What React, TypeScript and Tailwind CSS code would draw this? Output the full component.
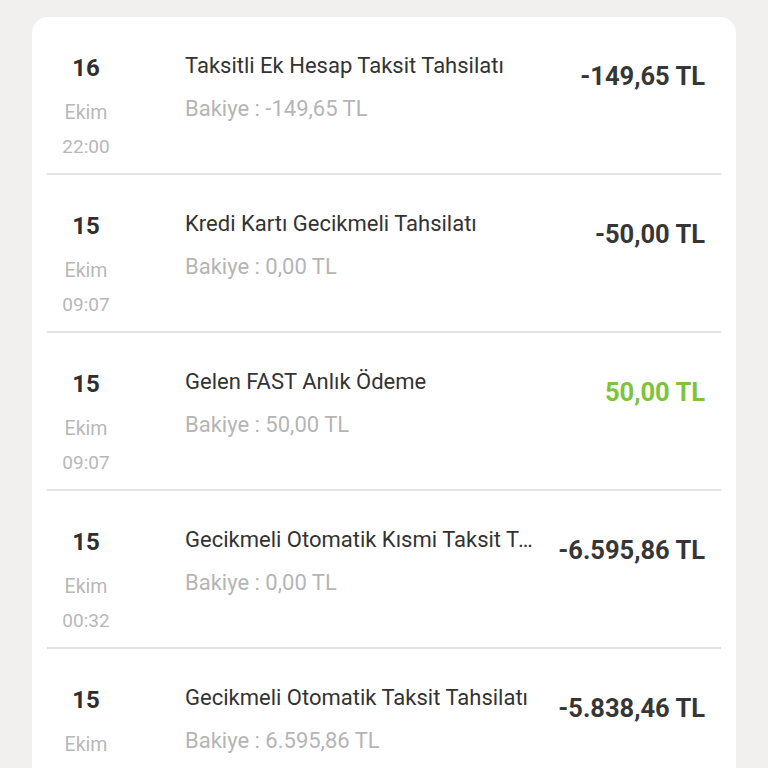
import React from "react";

type Row = { day: string; month: string; time: string; title: string; balance: string; amount: string; positive?: boolean };

const rows: Row[] = [
  { day: "16", month: "Ekim", time: "22:00", title: "Taksitli Ek Hesap Taksit Tahsilatı", balance: "Bakiye : -149,65 TL", amount: "-149,65 TL" },
  { day: "15", month: "Ekim", time: "09:07", title: "Kredi Kartı Gecikmeli Tahsilatı", balance: "Bakiye : 0,00 TL", amount: "-50,00 TL" },
  { day: "15", month: "Ekim", time: "09:07", title: "Gelen FAST Anlık Ödeme", balance: "Bakiye : 50,00 TL", amount: "50,00 TL", positive: true },
  { day: "15", month: "Ekim", time: "00:32", title: "Gecikmeli Otomatik Kısmi Taksit Tahsilatı", balance: "Bakiye : 0,00 TL", amount: "-6.595,86 TL" },
  { day: "15", month: "Ekim", time: "00:00", title: "Gecikmeli Otomatik Taksit Tahsilatı", balance: "Bakiye : 6.595,86 TL", amount: "-5.838,46 TL" },
];

export default function App() {
  return (
    <div className="w-[768px] h-[768px] overflow-hidden bg-[#f1f0ee] pt-[17px] px-[32px]" style={{ fontFamily: "Roboto, sans-serif" }}>
      <div className="bg-white rounded-t-[16px] px-[15px] h-[800px]">
        {rows.map((r, i) => (
          <div key={i} className={i > 0 ? "border-t-2 border-[#e2e2e2]" : ""}>
            <div className="flex h-[156px] pt-[36px]">
              <div className="w-[78px] shrink-0 flex flex-col items-center">
                <div className="text-[24px] leading-[30px] font-bold text-[#2f2f2f]">{r.day}</div>
                <div className="mt-[15px] text-[19.5px] leading-[30px] text-[#b8b8b8]">{r.month}</div>
                <div className="mt-[4px] text-[19px] leading-[30px] text-[#b8b8b8]">{r.time}</div>
              </div>
              <div className="ml-[60px] flex-1 min-w-0">
                <div className="text-[22px] leading-[26px] text-[#333333] truncate">{r.title}</div>
                <div className="mt-[17px] text-[22px] leading-[26px] text-[#b5b5b5]">{r.balance}</div>
              </div>
              <div className={"shrink-0 pl-[20px] pr-[16px] pt-[8px] text-[25.5px] leading-[30px] font-bold " + (r.positive ? "text-[#7cc43a]" : "text-[#363636]")}>
                {r.amount}
              </div>
            </div>
          </div>
        ))}
      </div>
    </div>
  );
}
